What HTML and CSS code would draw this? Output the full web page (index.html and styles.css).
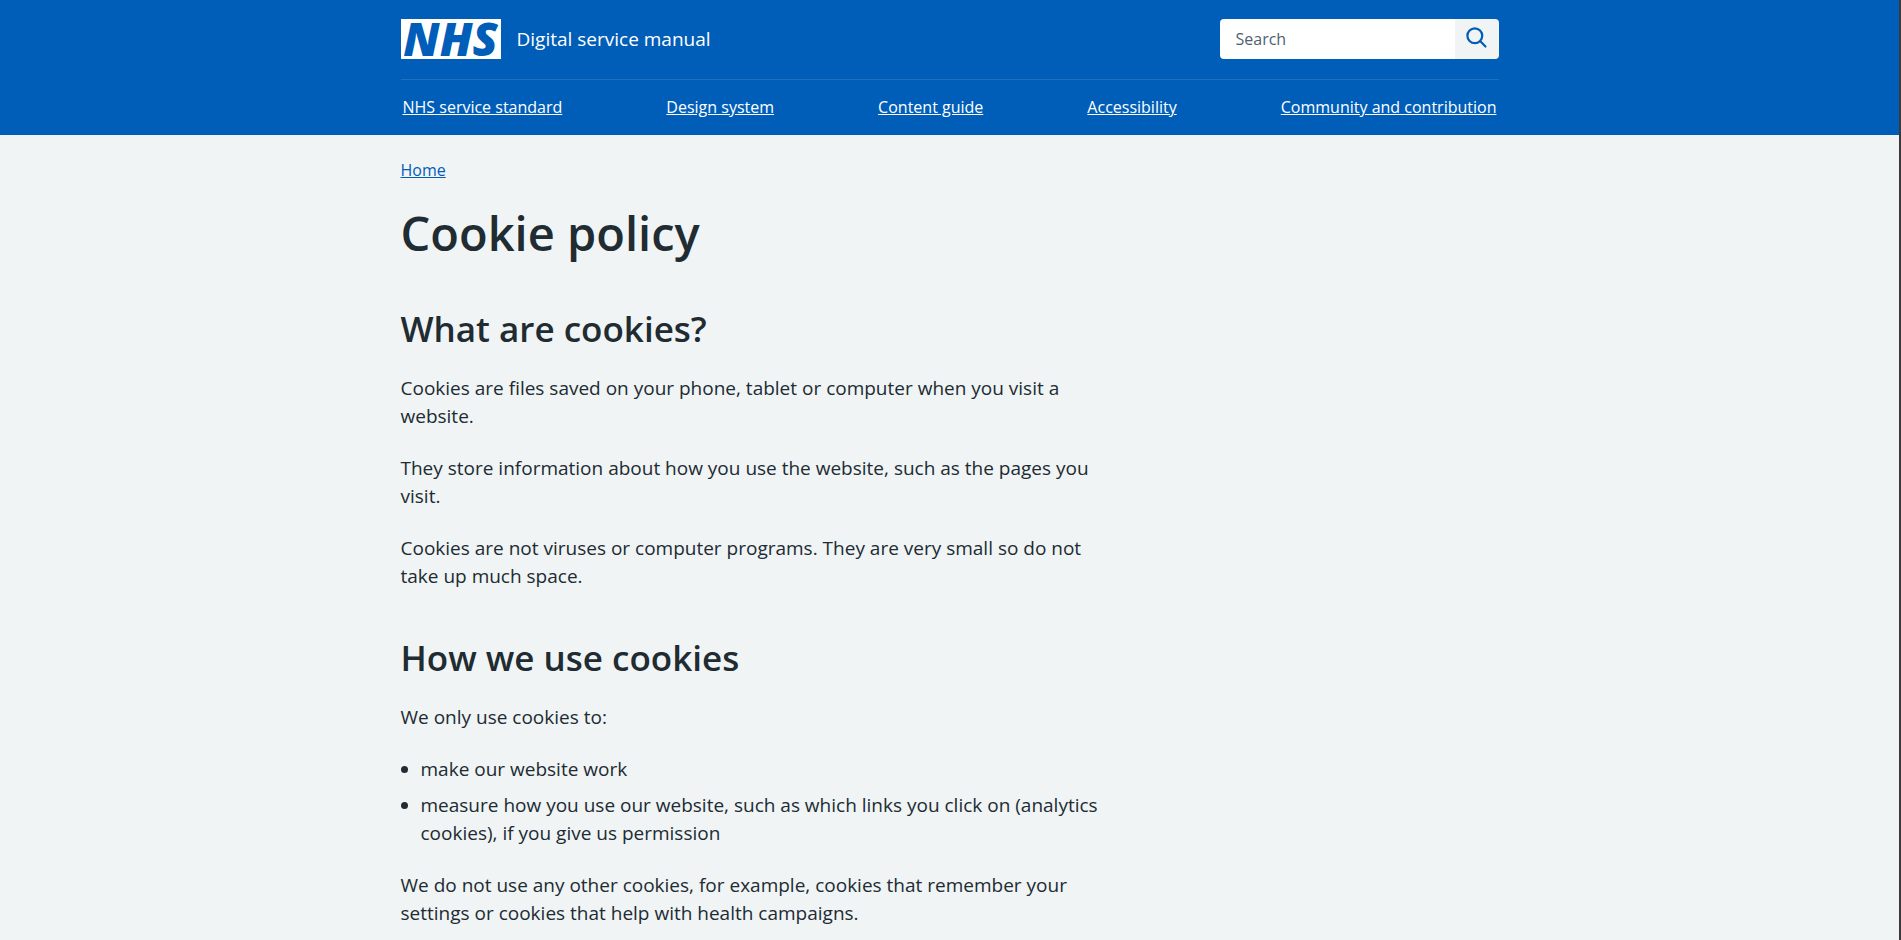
FILE: index.html
```html
<!DOCTYPE html>
<html lang="en">
<head>
  <meta charset="UTF-8">
  <meta name="viewport" content="width=device-width, initial-scale=1.0">
  <title>Cookie policy - NHS digital service manual</title>
  <link rel="stylesheet" href="styles.css">
</head>
<body>
  <header class="header">
    <div class="container">
      <div class="header-top">
        <a class="brand" href="#">
          <span class="logo">NHS</span>
          <span class="service-name">Digital service manual</span>
        </a>
        <form class="search" role="search">
          <input class="search-input" type="search" placeholder="Search" aria-label="Search the service manual">
          <button class="search-button" type="submit" aria-label="Search">
            <svg class="search-icon" viewBox="0 0 24 24" aria-hidden="true">
              <circle cx="10.5" cy="10.5" r="6.6"></circle>
              <path d="M15.4 15.4l4.6 4.6"></path>
            </svg>
          </button>
        </form>
      </div>
      <nav class="nav" aria-label="Primary navigation">
        <a href="#">NHS service standard</a>
        <a href="#">Design system</a>
        <a href="#">Content guide</a>
        <a href="#">Accessibility</a>
        <a href="#">Community and contribution</a>
      </nav>
    </div>
  </header>

  <div class="container">
    <nav class="breadcrumb" aria-label="Breadcrumb">
      <a href="#">Home</a>
    </nav>

    <main class="content">
      <h1>Cookie policy</h1>

      <h2>What are cookies?</h2>
      <p>Cookies are files saved on your phone, tablet or computer when you visit a website.</p>
      <p>They store information about how you use the website, such as the pages you visit.</p>
      <p>Cookies are not viruses or computer programs. They are very small so do not take up much space.</p>

      <h2>How we use cookies</h2>
      <p>We only use cookies to:</p>
      <ul>
        <li>make our website work</li>
        <li>measure how you use our website, such as which links you click on (analytics cookies), if you give us permission</li>
      </ul>
      <p>We do not use any other cookies, for example, cookies that remember your settings or cookies that help with health campaigns.</p>
    </main>
  </div>
</body>
</html>
```
FILE: styles.css
```css
* {
  box-sizing: border-box;
}

html {
  min-height: 100%;
  background-color: #f0f4f5;
  border-right: 2px solid #3a3a3a;
}

body {
  margin: 0;
  background-color: #f0f4f5;
  color: #212b32;
  font-family: "Open Sans", "Noto Sans", sans-serif;
  font-size: 19px;
  line-height: 28px;
}

.container {
  max-width: 1098px;
  margin: 0 auto;
}

/* Header */
.header {
  background-color: #005eb8;
}

.header-top {
  display: flex;
  justify-content: space-between;
  align-items: center;
  padding: 19px 0 20px;
  border-bottom: 1px solid #1f6fbf;
}

.brand {
  display: flex;
  align-items: center;
  gap: 16px;
  color: #fff;
  text-decoration: none;
}

.logo {
  width: 100px;
  height: 40px;
  background-color: #fff;
  color: #005eb8;
  font-family: "Open Sans", sans-serif;
  font-size: 46px;
  font-style: italic;
  font-weight: 800;
  line-height: 38px;
  text-align: center;
}

.service-name {
  font-size: 19px;
}

.search {
  display: flex;
  width: 279px;
  height: 40px;
  border-radius: 4px;
  overflow: hidden;
}

.search-input {
  flex: 1;
  min-width: 0;
  padding: 0 16px;
  border: 0;
  background-color: #fff;
  font-family: inherit;
  font-size: 16px;
}

.search-input::placeholder {
  color: #4c6272;
}

.search-button {
  width: 44px;
  padding: 0 0 4px;
  border: 0;
  background-color: #f0f4f5;
  cursor: pointer;
}

.search-icon {
  display: block;
  width: 27px;
  height: 27px;
  margin: 0 auto;
  fill: none;
  stroke: #005eb8;
  stroke-width: 2;
  stroke-linecap: round;
}

.nav {
  display: flex;
  justify-content: space-between;
  padding: 13px 2px 14px;
  font-size: 16px;
}

.nav a {
  color: #fff;
}

/* Breadcrumb */
.breadcrumb {
  padding-top: 21px;
  font-size: 16px;
}

.breadcrumb a {
  color: #005eb8;
}

/* Content */
.content {
  max-width: 704px;
}

h1 {
  margin: 21px 0 47px;
  font-size: 47px;
  font-weight: 600;
  line-height: 56px;
}

h2 {
  margin: 47px 0 24px;
  font-size: 35px;
  font-weight: 600;
  line-height: 42px;
}

p {
  margin: 0 0 24px;
}

ul {
  margin: 0 0 24px;
  padding-left: 20px;
}

li {
  margin-bottom: 8px;
}

li:last-child {
  margin-bottom: 0;
}
```
